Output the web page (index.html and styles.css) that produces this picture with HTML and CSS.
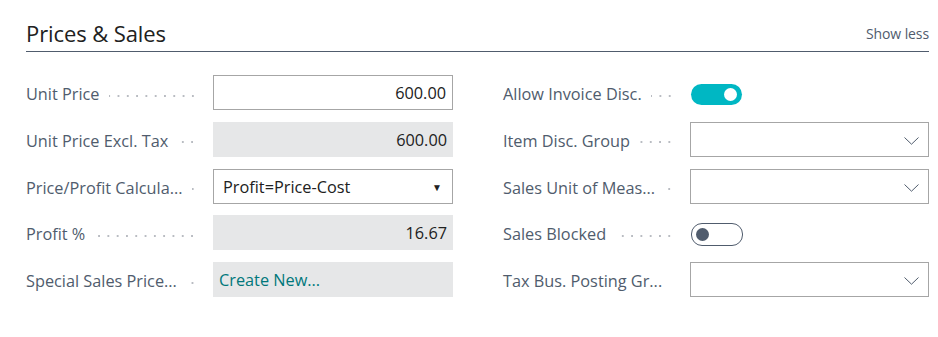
FILE: index.html
```html
<!DOCTYPE html>
<html>
<head>
<meta charset="utf-8">
<link rel="stylesheet" href="styles.css">
</head>
<body>
<section class="group">
  <header class="group-head">
    <h2 class="group-title">Prices &amp; Sales</h2>
    <a class="show-less">Show less</a>
  </header>
  <div class="grid">
    <div class="col">
      <div class="row">
        <div class="label"><span class="ltext">Unit Price</span><span class="dots"></span></div>
        <div class="field input num">600.00</div>
      </div>
      <div class="row">
        <div class="label"><span class="ltext">Unit Price Excl. Tax</span><span class="dots"></span></div>
        <div class="field readonly num">600.00</div>
      </div>
      <div class="row">
        <div class="label"><span class="ltext">Price/Profit Calcula...</span><span class="dots"></span></div>
        <div class="field input select"><span>Profit=Price-Cost</span><span class="tri">▼</span></div>
      </div>
      <div class="row">
        <div class="label"><span class="ltext">Profit %</span><span class="dots"></span></div>
        <div class="field readonly num">16.67</div>
      </div>
      <div class="row">
        <div class="label"><span class="ltext">Special Sales Price...</span><span class="dots"></span></div>
        <div class="field readonly link">Create New...</div>
      </div>
    </div>
    <div class="col">
      <div class="row">
        <div class="label"><span class="ltext">Allow Invoice Disc.</span><span class="dots"></span></div>
        <div class="toggle-cell"><span class="toggle on"><span class="knob"></span></span></div>
      </div>
      <div class="row">
        <div class="label"><span class="ltext">Item Disc. Group</span><span class="dots"></span></div>
        <div class="field input combo"><svg class="chev" width="15" height="8" viewBox="0 0 15 8"><path d="M0.5 0.5 L7.5 7.2 L14.5 0.5" fill="none" stroke="#505c6d" stroke-width="1"/></svg></div>
      </div>
      <div class="row">
        <div class="label"><span class="ltext">Sales Unit of Meas...</span><span class="dots"></span></div>
        <div class="field input combo"><svg class="chev" width="15" height="8" viewBox="0 0 15 8"><path d="M0.5 0.5 L7.5 7.2 L14.5 0.5" fill="none" stroke="#505c6d" stroke-width="1"/></svg></div>
      </div>
      <div class="row">
        <div class="label"><span class="ltext">Sales Blocked</span><span class="dots"></span></div>
        <div class="toggle-cell"><span class="toggle off"><span class="knob"></span></span></div>
      </div>
      <div class="row">
        <div class="label"><span class="ltext">Tax Bus. Posting Gr...</span><span class="dots"></span></div>
        <div class="field input combo"><svg class="chev" width="15" height="8" viewBox="0 0 15 8"><path d="M0.5 0.5 L7.5 7.2 L14.5 0.5" fill="none" stroke="#505c6d" stroke-width="1"/></svg></div>
      </div>
    </div>
  </div>
</section>
</body>
</html>
```
FILE: styles.css
```css
html, body {
  margin: 0;
  padding: 0;
  background: #ffffff;
}
body {
  font-family: "Open Sans", "Noto Sans", sans-serif;
  color: #212121;
}
.group {
  padding: 17px 9px 0 26px;
}
.group-head {
  display: flex;
  justify-content: space-between;
  align-items: flex-end;
  border-bottom: 1px solid #505c6d;
  height: 34px;
}
.group-title {
  margin: 0;
  font-size: 22px;
  font-weight: 400;
  color: #212121;
  line-height: 28px;
  padding-bottom: 4px;
  letter-spacing: -0.1px;
}
.show-less {
  font-size: 14px;
  color: #505c6d;
  line-height: 18px;
  padding-bottom: 8px;
  letter-spacing: -0.1px;
}
.grid {
  display: grid;
  grid-template-columns: 427px 426px;
  column-gap: 50px;
  padding-top: 23px;
}
.col {
  display: flex;
  flex-direction: column;
  gap: 11.75px;
}
.row {
  display: flex;
  height: 35px;
  align-items: center;
}
.label {
  width: 187px;
  flex: none;
  display: flex;
  align-items: center;
  font-size: 16.3px;
  color: #505c6d;
  padding-top: 3px;
  box-sizing: border-box;
}
.ltext {
  white-space: nowrap;
}
.dots {
  flex: 1;
  height: 4px;
  margin: 3px 16px 0 9px;
  background-image: radial-gradient(circle, #b9bcc2 0.7px, transparent 1.1px);
  background-size: 9.3px 4px;
  background-repeat: repeat-x;
  background-position: right center;
}
.field {
  width: 240px;
  height: 35px;
  box-sizing: border-box;
  display: flex;
  align-items: center;
  font-size: 16.3px;
  color: #212121;
}
.input {
  border: 1px solid #a6a6a6;
  background: #fff;
}
.readonly {
  background: #e6e7e8;
}
.num {
  justify-content: flex-end;
  padding: 1px 6px 0 9px;
}
.select {
  justify-content: space-between;
  padding: 1px 10px 0 9px;
}
.tri {
  font-size: 10px;
  color: #212121;
}
.link {
  color: #00777b;
  padding: 1px 6px 0 6px;
}
.combo {
  justify-content: flex-end;
  padding: 3px 9px 0 9px;
}
.chev {
  display: block;
}
.toggle-cell {
  display: flex;
  align-items: center;
  height: 35px;
  padding-left: 1px;
  padding-top: 3px;
  box-sizing: border-box;
}
.toggle {
  display: flex;
  align-items: center;
  width: 51px;
  height: 21px;
  box-sizing: border-box;
  border-radius: 11px;
}
.toggle.on {
  background: #00b7c3;
  justify-content: flex-end;
  padding-right: 5px;
}
.toggle.off {
  border: 1px solid #505c6d;
  background: #fff;
  justify-content: flex-start;
  padding-left: 4px;
  width: 52px;
  height: 23px;
}
.knob {
  width: 13px;
  height: 13px;
  border-radius: 50%;
}
.toggle.on .knob {
  background: #fff;
}
.toggle.off .knob {
  background: #505c6d;
}
```
